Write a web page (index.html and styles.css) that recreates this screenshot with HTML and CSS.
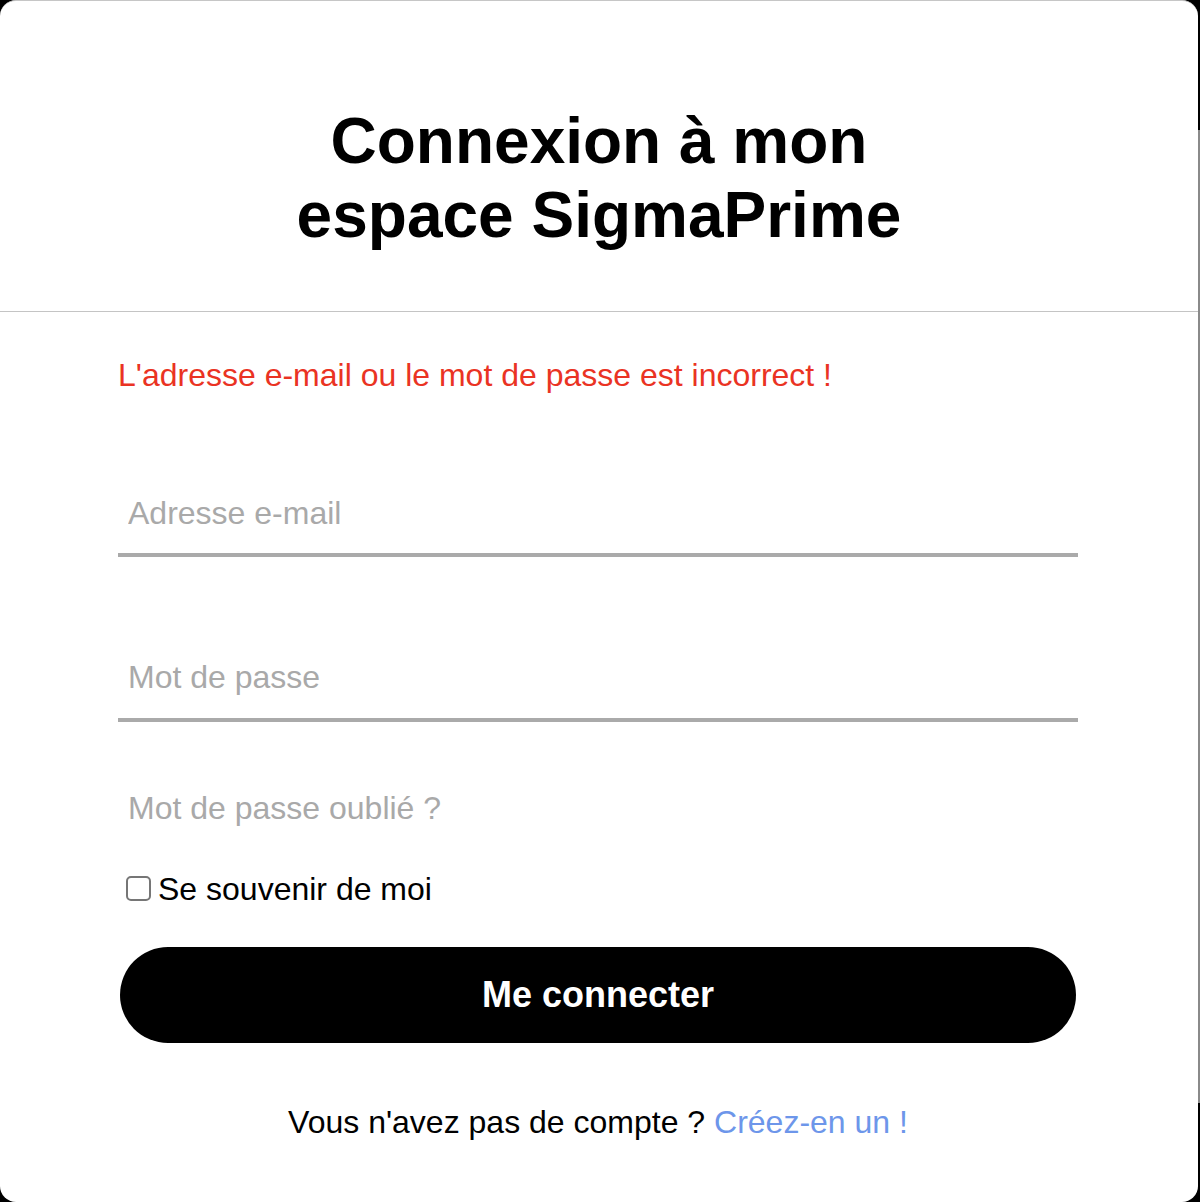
FILE: index.html
```html
<!DOCTYPE html>
<html lang="fr">
<head>
<meta charset="utf-8">
<title>Connexion</title>
<link rel="stylesheet" href="styles.css">
</head>
<body>
<div class="page">
  <main class="modal">
    <header class="modal-head">
      <h1 class="title">Connexion à mon<br>espace SigmaPrime</h1>
    </header>
    <form class="modal-body">
      <p class="error">L'adresse e-mail ou le mot de passe est incorrect !</p>
      <input class="field field-first" type="email" placeholder="Adresse e-mail">
      <input class="field field-second" type="password" placeholder="Mot de passe">
      <a class="forgot" href="#">Mot de passe oublié ?</a>
      <label class="remember"><input class="check" type="checkbox"><span>Se souvenir de moi</span></label>
      <button class="submit" type="button">Me connecter</button>
      <p class="signup">Vous n'avez pas de compte ? <a class="signup-link" href="#">Créez-en un !</a></p>
    </form>
  </main>
  <div class="scrolltrack"><div class="thumb"></div></div>
</div>
</body>
</html>
```

FILE: styles.css
```css
html, body {
  margin: 0;
  padding: 0;
  background: #000;
  height: 1202px;
  overflow: hidden;
}

body {
  font-family: "Liberation Sans", Arial, Helvetica, sans-serif;
  color: #000;
}

.page {
  display: flex;
  height: 1202px;
}

.modal {
  width: 1198px;
  height: 1202px;
  box-sizing: border-box;
  background: #fff;
  border-top: 1px solid #c6c6c6;
  border-radius: 16px;
  display: flex;
  flex-direction: column;
}

.modal-head {
  padding: 103px 0 59px;
  border-bottom: 1px solid #c4c4c4;
}

.title {
  margin: 0;
  font-size: 64px;
  font-weight: bold;
  line-height: normal;
  text-align: center;
}

.modal-body {
  display: flex;
  flex-direction: column;
  padding: 0 120px 0 118px;
}

.error {
  margin: 45px 0 0;
  font-size: 32px;
  line-height: normal;
  color: #ea3323;
}

.field {
  display: block;
  box-sizing: border-box;
  width: 100%;
  margin: 80px 0 0;
  padding: 22px 10px;
  font-family: "Liberation Sans", Arial, Helvetica, sans-serif;
  font-size: 32px;
  line-height: normal;
  border: none;
  border-bottom: 4px solid #aaaaaa;
  outline: none;
  background: transparent;
  color: #000;
}

.field-first {
  margin-top: 78px;
  padding-top: 23px;
  padding-bottom: 21px;
}

.field::placeholder {
  color: #a9a9a9;
}

.forgot {
  display: block;
  margin-top: 68px;
  padding-left: 10px;
  font-size: 32px;
  line-height: normal;
  color: #a9a9a9;
  text-decoration: none;
}

.remember {
  display: flex;
  align-items: center;
  gap: 7px;
  margin-top: 44px;
  padding-left: 8px;
  font-size: 32px;
  line-height: normal;
}

.check {
  appearance: none;
  -webkit-appearance: none;
  width: 25px;
  height: 25px;
  margin: 0 0 2px;
  box-sizing: border-box;
  border: 2px solid #767676;
  border-radius: 5px;
  background: #fff;
}

.submit {
  margin: 39px 2px 0;
  height: 96px;
  border: none;
  border-radius: 48px;
  background: #000;
  color: #fff;
  font-family: "Liberation Sans", Arial, Helvetica, sans-serif;
  font-size: 36px;
  font-weight: bold;
  cursor: pointer;
}

.signup {
  margin: 61px 0 0;
  text-align: center;
  font-size: 32px;
  line-height: normal;
}

.signup-link {
  color: #6d96ea;
  text-decoration: none;
}

.scrolltrack {
  width: 2px;
  padding-top: 130px;
}

.thumb {
  height: 973px;
  background: #8a8a8a;
}
```
